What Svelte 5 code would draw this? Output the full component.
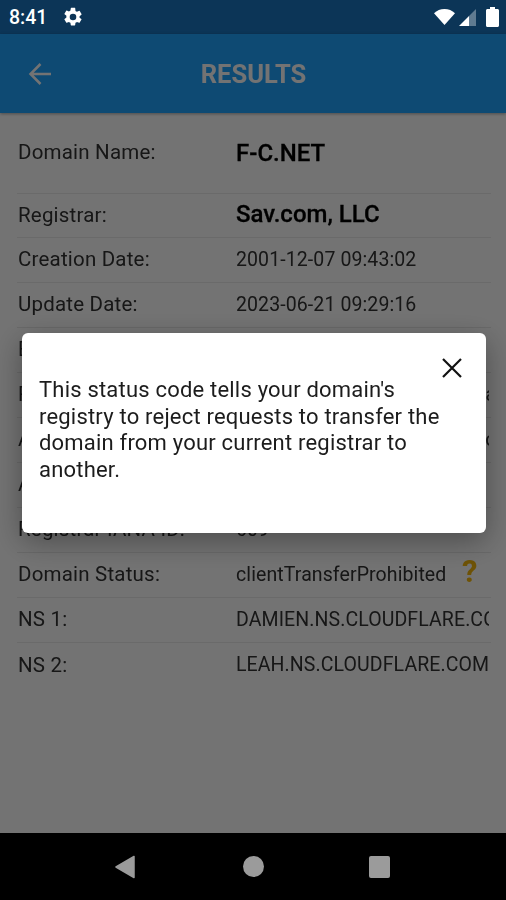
<script>
  const rows = [
    { label: 'Domain Name:', value: 'F-C.NET', kind: 'first' },
    { label: 'Registrar:', value: 'Sav.com, LLC', kind: 'strong' },
    { label: 'Creation Date:', value: '2001-12-07 09:43:02' },
    { label: 'Update Date:', value: '2023-06-21 09:29:16' },
    { label: 'Expiration Date:', value: '2024-12-07 09:43:02' },
    { label: 'Registrar URL:', value: 'https://www.sav.com/registrars' },
    { label: 'Abuse Email:', value: 'abuse@sav.com.registrar.info' },
    { label: 'Abuse Phone:', value: '+1.8883150000' },
    { label: 'Registrar IANA ID:', value: '609' },
    { label: 'Domain Status:', value: 'clientTransferProhibited', help: true },
    { label: 'NS 1:', value: 'DAMIEN.NS.CLOUDFLARE.COM' },
    { label: 'NS 2:', value: 'LEAH.NS.CLOUDFLARE.COM' }
  ];
</script>

<div class="phone">
  <header class="statusbar">
    <span class="time">8:41</span>
    <svg class="gear" viewBox="0 0 24 24" width="22" height="22" aria-hidden="true">
      <path fill="#fff" d="M19.14 12.94c.04-.3.06-.61.06-.94s-.02-.64-.07-.94l2.03-1.58a.5.5 0 0 0 .12-.64l-1.92-3.32a.5.5 0 0 0-.6-.22l-2.39.96a7 7 0 0 0-1.62-.94l-.36-2.54A.5.5 0 0 0 13.9 2h-3.84a.5.5 0 0 0-.48.42l-.36 2.54c-.59.24-1.13.56-1.62.94l-2.39-.96a.5.5 0 0 0-.6.22L2.69 8.48a.5.5 0 0 0 .12.64l2.03 1.58c-.05.3-.09.63-.09.94s.02.64.07.94l-2.03 1.58a.5.5 0 0 0-.12.64l1.92 3.32c.13.22.38.29.6.22l2.39-.96c.5.38 1.03.7 1.62.94l.36 2.54c.05.24.24.42.48.42h3.84c.24 0 .44-.18.47-.42l.36-2.54a7 7 0 0 0 1.62-.94l2.39.96c.22.08.47 0 .6-.22l1.92-3.32a.5.5 0 0 0-.12-.64zM12 15.6a3.6 3.6 0 1 1 0-7.2 3.6 3.6 0 0 1 0 7.2z"/>
    </svg>
    <span class="spacer"></span>
    <svg class="wifi" viewBox="0 0 21 16" width="21" height="16" aria-hidden="true">
      <path fill="#fff" d="M10.5 16 0 4.2C2.8 1.6 6.5 0 10.5 0s7.7 1.6 10.5 4.2z"/>
    </svg>
    <svg class="signal" viewBox="0 0 17 17" width="17" height="17" aria-hidden="true">
      <path fill="#fff" d="M0 17 10 7v10z"/>
      <path fill="#fff" opacity=".35" d="M10 7l7-7v17h-7z"/>
    </svg>
    <svg class="battery" viewBox="0 0 13 20" width="13" height="20" aria-hidden="true">
      <path fill="#fff" d="M4 0h5v2h2.5c.8 0 1.5.7 1.5 1.5V18.5c0 .8-.7 1.5-1.5 1.5h-10C.7 20 0 19.3 0 18.5V3.5C0 2.7.7 2 1.5 2H4z"/>
    </svg>
  </header>

  <main class="screen">
    <div class="appbar">
      <svg class="back" viewBox="0 0 24 24" width="24" height="24" aria-hidden="true">
        <path fill="none" stroke="currentColor" stroke-width="2.5" d="M23 12H3M12.5 2 2.5 12l10 10"/>
      </svg>
      <h1>RESULTS</h1>
    </div>

    <section class="list">
      {#each rows as row}
        <div class="row {row.kind ?? ''}">
          <span class="label">{row.label}</span>
          <span class="value">{row.value}</span>
          {#if row.help}<span class="help">?</span>{/if}
        </div>
      {/each}
    </section>

    <div class="scrim"></div>

    <div class="modal">
      <svg class="close" viewBox="0 0 20 20" width="20" height="20" aria-hidden="true">
        <path fill="none" stroke="#111" stroke-width="2.2" d="M1 1l18 18M19 1 1 19"/>
      </svg>
      <p>This status code tells your domain's registry to reject requests to transfer the domain from your current registrar to another.</p>
    </div>
  </main>

  <nav class="navbar">
    <svg viewBox="0 0 20 24" width="20" height="24" aria-hidden="true">
      <path fill="#9b9b9b" stroke="#9b9b9b" stroke-width="1.5" stroke-linejoin="round" d="M19 1.5v21L1 12z"/>
    </svg>
    <span class="dot"></span>
    <span class="square"></span>
  </nav>
</div>

<style>
  :global(body) {
    margin: 0;
    background: #000;
  }
  .phone {
    width: 506px;
    height: 900px;
    display: flex;
    flex-direction: column;
    font-family: Roboto, "Liberation Sans", sans-serif;
    overflow: hidden;
    filter: blur(0.6px);
  }
  .statusbar {
    height: 34px;
    flex: none;
    background: #0c3557;
    display: flex;
    align-items: center;
    padding: 0 7px 0 9px;
    box-sizing: border-box;
    color: #fff;
  }
  .time {
    font-size: 19.5px;
    font-weight: 500;
    width: 53px;
  }
  .spacer { flex: 1; }
  .wifi { margin-right: 4px; }
  .signal { margin-right: 10px; }
  .screen {
    position: relative;
    flex: 1;
    background: #fff;
    display: flex;
    flex-direction: column;
    min-height: 0;
  }
  .appbar {
    height: 79px;
    flex: none;
    background: #21a4ff;
    color: #fff;
    display: flex;
    align-items: center;
    justify-content: center;
    position: relative;
    box-shadow: 0 1px 3px rgba(0, 0, 0, .35);
  }
  .back {
    position: absolute;
    left: 28px;
    top: 28px;
  }
  h1 {
    margin: 0;
    font-size: 25.5px;
    font-weight: 700;
    padding-left: 1px;
  }
  .list {
    padding: 0 15px 0 17px;
  }
  .row {
    display: grid;
    grid-template-columns: 218px 1fr;
    align-items: center;
    height: 45.05px;
    box-sizing: border-box;
    border-bottom: 1px solid #ececec;
    font-size: 20.5px;
    letter-spacing: .2px;
    padding: 0 2px 2px 1px;
    position: relative;
    white-space: nowrap;
  }
  .row:last-child { border-bottom: none; }
  .row.first { height: 81px; }
  .row.strong { height: 44px; }
  .first .value, .strong .value {
    font-size: 24px;
    font-weight: 500;
    letter-spacing: 0;
    color: #000;
    -webkit-text-stroke: .3px #000;
  }
  .first .value { padding-top: 2px; }
  .strong .value { margin-top: -1px; }
  .value {
    overflow: hidden;
    color: #333;
    font-size: 19.5px;
    letter-spacing: .1px;
  }
  .label { color: #333; }
  .help {
    position: absolute;
    left: 445px;
    top: 0;
    font-size: 31px;
    font-weight: 700;
    color: #f5b90f;
    letter-spacing: 0;
  }
  .scrim {
    position: absolute;
    inset: 0;
    background: rgba(0, 0, 0, .55);
  }
  .modal {
    position: absolute;
    left: 22px;
    top: 299px;
    width: 464px;
    height: 200px;
    background: #fff;
    border-radius: 6px;
    box-sizing: border-box;
    padding: 44px 40px 0 17px;
    color: #1c1c1c;
    box-shadow: 0 8px 30px rgba(0, 0, 0, .35);
  }
  .modal p {
    margin: 0;
    font-size: 22px;
    letter-spacing: .2px;
    line-height: 26.5px;
  }
  .close {
    position: absolute;
    right: 24px;
    top: 25px;
  }
  .navbar {
    height: 67px;
    flex: none;
    background: #000;
    display: flex;
    align-items: center;
    padding-left: 115px;
    box-sizing: border-box;
  }
  .dot {
    width: 21px;
    height: 21px;
    border-radius: 50%;
    background: #9b9b9b;
    margin-left: 108px;
  }
  .square {
    width: 21px;
    height: 22px;
    border-radius: 2px;
    background: #9b9b9b;
    margin-left: 105px;
  }
</style>
